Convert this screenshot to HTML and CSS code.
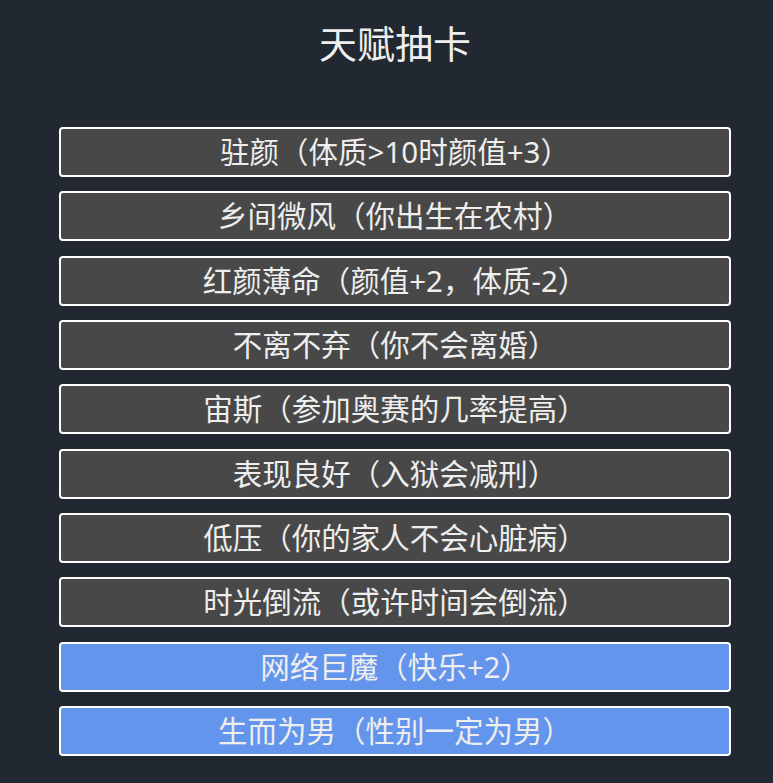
FILE: index.html
```html
<!DOCTYPE html>
<html lang="zh-CN">
<head>
    <meta charset="UTF-8">
    <meta name="viewport" content="width=device-width, initial-scale=1.0">
    <title>天赋抽卡</title>
    <link rel="stylesheet" href="styles.css">
</head>
<body>
    <div id="talent">
        <h1>天赋抽卡</h1>
        <ul id="talent-list">
            <li class="talent-item">驻颜（体质&gt;10时颜值+3）</li>
            <li class="talent-item">乡间微风（你出生在农村）</li>
            <li class="talent-item">红颜薄命（颜值+2，体质-2）</li>
            <li class="talent-item">不离不弃（你不会离婚）</li>
            <li class="talent-item">宙斯（参加奥赛的几率提高）</li>
            <li class="talent-item">表现良好（入狱会减刑）</li>
            <li class="talent-item">低压（你的家人不会心脏病）</li>
            <li class="talent-item">时光倒流（或许时间会倒流）</li>
            <li class="talent-item selected">网络巨魔（快乐+2）</li>
            <li class="talent-item selected">生而为男（性别一定为男）</li>
        </ul>
    </div>
</body>
</html>
```

FILE: styles.css
```css
body {
    font-family: "Noto Sans", "Noto Sans CJK SC", sans-serif;
    background-color: #222831;
    color: #eeeeee;
    margin: 0;
    padding: 0;
}
#talent {
    width: 672px;
    margin-left: 59px;
    padding-top: 16px;
}
h1 {
    font-size: 38px;
    font-weight: normal;
    text-align: center;
    margin: 0 0 57px;
    line-height: 54px;
}
#talent-list {
    list-style: none;
    margin: 0;
    padding: 0;
    display: flex;
    flex-direction: column;
    gap: 14.33px;
}
.talent-item {
    box-sizing: border-box;
    height: 50px;
    border: 2px solid #ffffff;
    border-radius: 4px;
    background-color: #484848;
    font-size: 29.5px;
    line-height: 46px;
    text-align: center;
    cursor: pointer;
}
.talent-item.selected {
    background-color: #6495ed;
}
```
